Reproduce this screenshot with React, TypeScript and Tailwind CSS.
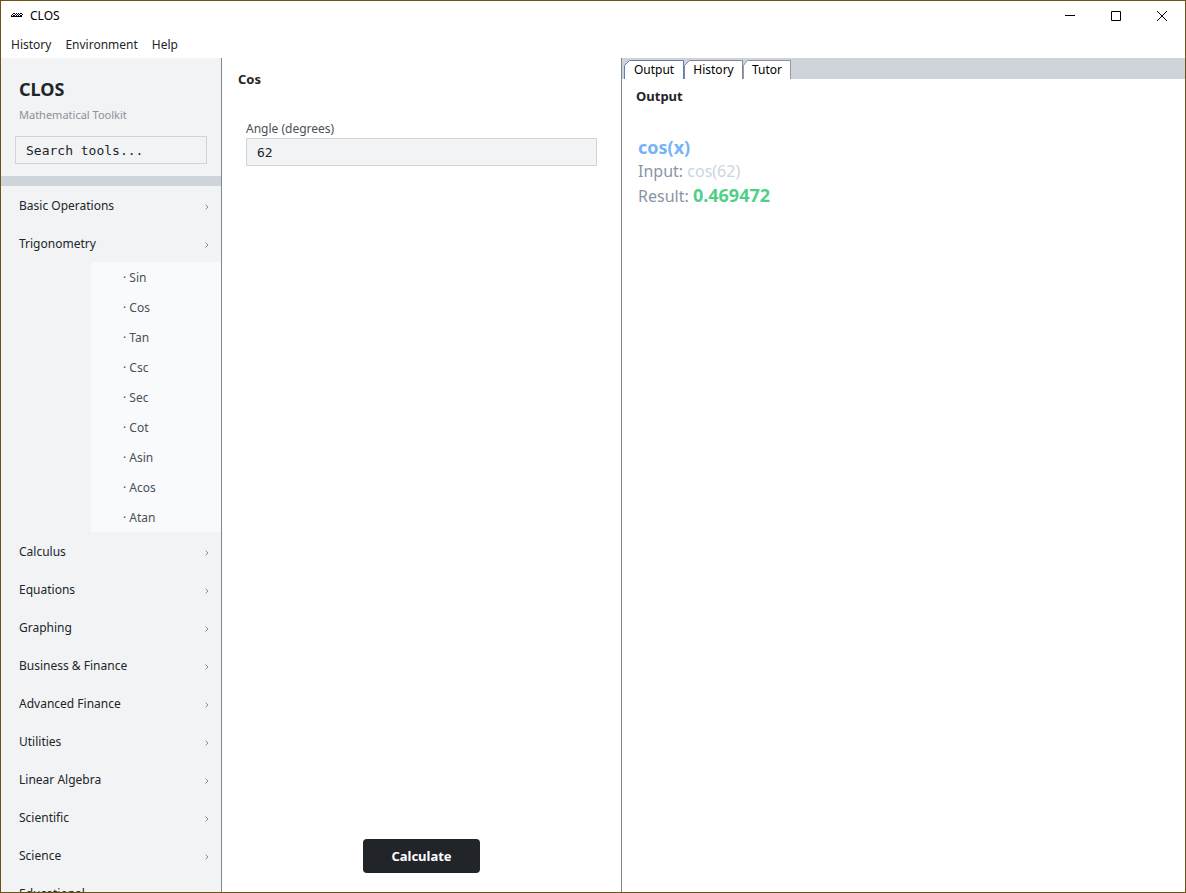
import React, { useState } from 'react';

const categories = [
  { name: 'Basic Operations' },
  {
    name: 'Trigonometry',
    tools: ['Sin', 'Cos', 'Tan', 'Csc', 'Sec', 'Cot', 'Asin', 'Acos', 'Atan'],
  },
  { name: 'Calculus' },
  { name: 'Equations' },
  { name: 'Graphing' },
  { name: 'Business & Finance' },
  { name: 'Advanced Finance' },
  { name: 'Utilities' },
  { name: 'Linear Algebra' },
  { name: 'Scientific' },
  { name: 'Science' },
  { name: 'Educational' },
];

const tabs = [
  { name: 'Output', width: 'w-[60px]' },
  { name: 'History', width: 'w-[59px]' },
  { name: 'Tutor', width: 'w-12' },
];

function TitleBar() {
  return (
    <header className="flex h-[30px] shrink-0 items-center justify-between">
      <div className="flex items-center gap-[7px] pl-2.5 text-xs text-black">
        <svg width="12" height="6" viewBox="0 0 12 6" stroke="#000" fill="none" aria-hidden="true">
          <path d="M2 .5h2M5 .5h1M7 .5h1M9 .5h2M1 1.5h1M4 1.5h1M6 1.5h1M8 1.5h1M11 1.5h1M0 2.5h1M2 2.5h2M5 2.5h1M7 2.5h1M9 2.5h2M0 3.5h11" />
        </svg>
        <span>CLOS</span>
      </div>
      <div className="flex h-full">
        <button aria-label="Minimize" className="flex w-[46px] items-center justify-center">
          <svg width="10" height="10" stroke="#000">
            <path d="M0 4.5h10" />
          </svg>
        </button>
        <button aria-label="Maximize" className="flex w-[46px] items-center justify-center">
          <svg width="10" height="10" stroke="#000" fill="none">
            <path d="M.5.5h9v9h-9z" />
          </svg>
        </button>
        <button aria-label="Close" className="flex w-[46px] items-center justify-center">
          <svg width="10" height="10" stroke="#000">
            <path d="M0 0l10 10M10 0L0 10" />
          </svg>
        </button>
      </div>
    </header>
  );
}

function Sidebar() {
  const [open, setOpen] = useState('Trigonometry');

  return (
    <aside className="flex min-h-0 flex-col overflow-hidden border-r border-[#7f8790] bg-[#f1f3f5]">
      <div className="px-3.5 pt-5 pb-3">
        <h1 className="pl-1 text-lg leading-[22px] font-bold text-[#212529]">CLOS</h1>
        <p className="my-1.5 pl-1 text-[11px] leading-[18px] text-[#8b929a]">Mathematical Toolkit</p>
        <div className="pt-1.5">
          <input
            type="text"
            aria-label="Search tools"
            placeholder="Search tools..."
            className="block h-7 w-full border border-[#ced4da] px-2.5 font-['DejaVu_Sans_Mono',monospace] text-[13px] text-[#212529] placeholder:text-[#212529]"
          />
        </div>
      </div>
      <div className="h-2.5 shrink-0 bg-[#ced4da]" />
      <nav className="min-h-0 flex-1 overflow-hidden">
        {categories.map((category) => (
          <div key={category.name}>
            <button
              onClick={() => setOpen(open === category.name ? '' : category.name)}
              className="flex h-[38px] w-full items-center justify-between pt-0.5 pr-3 pl-[18px] text-xs text-[#212529]"
            >
              {category.name}
              <svg width="4" height="6" className="mt-0.5" stroke="#868e96" fill="none" aria-hidden="true">
                <path d="M.5.5L3 3 .5 5.5" />
              </svg>
            </button>
            {category.tools && open === category.name && (
              <div className="ml-[90px] bg-[#f8fafc]">
                {category.tools.map((tool) => (
                  <button
                    key={tool}
                    className="flex h-[30px] w-full items-center pt-0.5 pl-8 text-xs text-[#495057]"
                  >
                    · {tool}
                  </button>
                ))}
              </div>
            )}
          </div>
        ))}
      </nav>
    </aside>
  );
}

function ToolPanel() {
  return (
    <main className="flex flex-col px-4 pt-3 pb-[19px]">
      <h2 className="text-[13px] leading-[18px] font-bold text-[#212529]">Cos</h2>
      <div className="mt-8 px-2">
        <label htmlFor="angle" className="block text-xs leading-[18px] text-[#495057]">
          Angle (degrees)
        </label>
        <input
          id="angle"
          type="text"
          defaultValue="62"
          className="block h-7 w-full border border-[#ced4da] bg-[#f1f3f5] px-2.5 font-['DejaVu_Sans_Mono',monospace] text-[13px] text-[#212529]"
        />
      </div>
      <button className="mt-auto h-[34px] self-center rounded bg-[#212529] px-7 pt-0.5 text-[13px] font-bold text-white">
        Calculate
      </button>
    </main>
  );
}

function OutputPanel() {
  const [active, setActive] = useState('Output');

  return (
    <section className="border-l border-[#7f8790]">
      <div className="flex h-[21px] items-end bg-[#ced2da] pl-0.5">
        {tabs.map((tab) => (
          <button
            key={tab.name}
            onClick={() => setActive(tab.name)}
            className={`relative h-[19px] text-xs leading-5 text-black ${tab.width}`}
          >
            <svg
              viewBox="0 0 60 19"
              preserveAspectRatio="none"
              className="absolute inset-0 h-full w-full"
              fill="#fff"
              stroke={active === tab.name ? '#5b7cc4' : '#7f8790'}
              aria-hidden="true"
            >
              <path d="M.5 20V5.5l5-5h54V20" />
            </svg>
            <span className="relative">{tab.name}</span>
          </button>
        ))}
      </div>
      <div className="px-3.5 pt-2">
        <h2 className="text-[13px] leading-[18px] font-bold text-[#212529]">Output</h2>
        <div className="mt-[30px] px-0.5 text-base leading-6 text-[#8a94a6]">
          <h3 className="text-lg leading-6 font-bold text-[#74b3fb]">cos(x)</h3>
          <p>
            Input: <span className="text-[#cbd5e1]">cos(62)</span>
          </p>
          <p>
            Result: <strong className="text-lg leading-6 font-bold text-[#51cf88]">0.469472</strong>
          </p>
        </div>
      </div>
    </section>
  );
}

export default function App() {
  return (
    <div className="flex h-screen flex-col border border-[#6f5118] bg-white font-['Noto_Sans','Open_Sans',sans-serif]">
      <TitleBar />
      <nav className="flex h-[27px] shrink-0 items-center gap-3.5 px-2.5 text-xs text-[#212529]">
        <button>History</button>
        <button>Environment</button>
        <button>Help</button>
      </nav>
      <div className="grid min-h-0 flex-1 grid-cols-[221px_399fr_564fr] grid-rows-[minmax(0,1fr)]">
        <Sidebar />
        <ToolPanel />
        <OutputPanel />
      </div>
    </div>
  );
}
